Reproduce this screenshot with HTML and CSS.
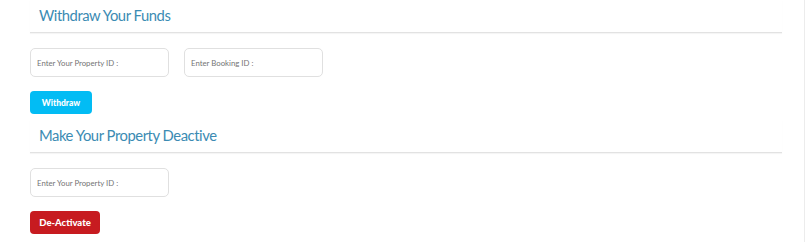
FILE: index.html
```html
<!DOCTYPE html>
<html>
<head>
<meta charset="utf-8">
<link rel="stylesheet" href="styles.css">
</head>
<body>
<div class="page">
  <section class="panel">
    <h2 class="title">Withdraw Your Funds</h2>
    <div class="fields">
      <input class="field" type="text" placeholder="Enter Your Property ID :">
      <input class="field" type="text" placeholder="Enter Booking ID :">
    </div>
    <button class="btn btn-blue">Withdraw</button>
  </section>
  <section class="panel panel-second">
    <h2 class="title">Make Your Property Deactive</h2>
    <div class="fields">
      <input class="field" type="text" placeholder="Enter Your Property ID :">
    </div>
    <button class="btn btn-red">De-Activate</button>
  </section>
</div>
</body>
</html>
```

FILE: styles.css
```css
html, body {
  margin: 0;
  padding: 0;
  background: #fff;
}
.page {
  width: 805px;
  height: 242px;
  border-right: 1px solid #ececec;
  font-family: Lato, "Open Sans", "Liberation Sans", sans-serif;
  padding: 0 22px 0 30px;
  box-sizing: border-box;
}
.panel {
  display: flex;
  flex-direction: column;
  align-items: flex-start;
}
.panel-second {
  margin-top: 6px;
}
.title {
  align-self: stretch;
  margin: 0;
  padding: 5px 0 7px 9px;
  font-weight: 400;
  font-size: 14.8px;
  letter-spacing: -0.45px;
  line-height: 20px;
  color: #3b8bb3;
  border-bottom: 1px solid #e2e2e2;
  box-shadow: 0 1px 1px rgba(0,0,0,0.04);
}
.fields {
  display: flex;
  gap: 15px;
  margin-top: 15px;
}
.field {
  width: 139px;
  height: 29px;
  box-sizing: border-box;
  border: 1px solid #e0e0e0;
  border-radius: 5px;
  padding: 0 6px;
  font-family: inherit;
  font-size: 7.8px;
  color: #666;
  outline: none;
}
.field::placeholder {
  color: #747474;
}
.btn {
  margin-top: 14px;
  height: 23px;
  border: none;
  border-radius: 4px;
  padding: 0;
  font-family: inherit;
  font-weight: 900;
  font-size: 8.5px;
  color: #fff;
}
.btn-blue {
  background: #02bcf4;
  width: 62px;
}
.btn-red {
  background: #c71b20;
  width: 70px;
  font-size: 9.5px;
}
```
